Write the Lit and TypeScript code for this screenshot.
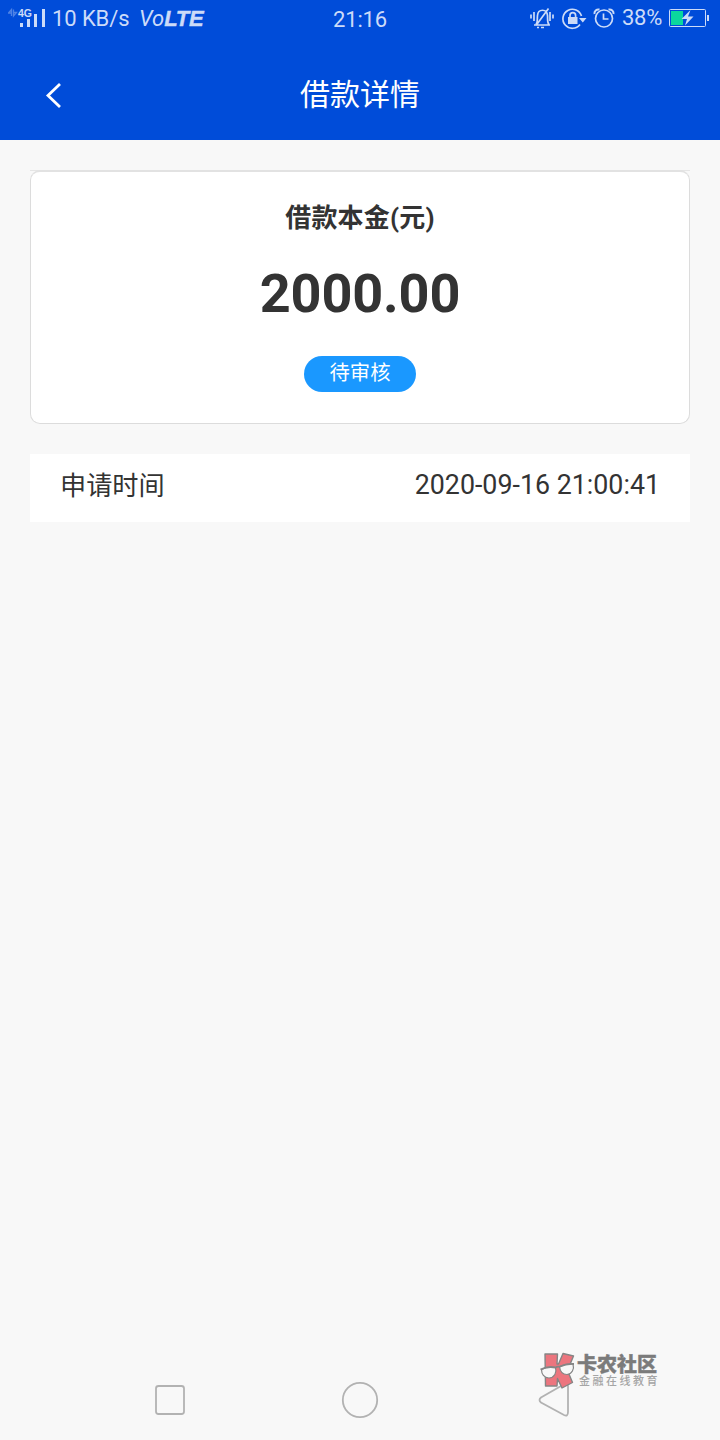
import { LitElement, html, css } from "lit";
import { customElement, property } from "lit/decorators.js";

@customElement("status-bar")
class StatusBar extends LitElement {
  static styles = css`
    :host { display: flex; height: 40px; position: relative; color: #ccdbf8; font: 22px/38px Roboto, sans-serif; justify-content: space-between; }
    svg { display: block; flex: none; }
    .side { display: flex; white-space: pre; }
    .signal { margin-left: 8px; }
    .speed { margin-left: 6px; width: 87px; letter-spacing: -0.1px; line-height: 37px; }
    .volte { font: italic 22px/38px Roboto, sans-serif; }
    .volte b { font: italic bold 22px/38px "Liberation Sans", sans-serif; letter-spacing: -0.3px; -webkit-text-stroke: 0.4px #ccdbf8; }
    .clock { position: absolute; left: 0; right: 0; text-align: center; line-height: 40px; letter-spacing: -0.2px; }
    .percent { width: 47px; line-height: 36px; letter-spacing: -0.3px; }
    .small { font: bold 10px "Liberation Sans", sans-serif; }
  `;
  render() {
    return html`
      <div class="side">
        <svg class="signal" width="38" height="38" viewBox="8 0 38 38" fill="#ccdbf8">
          <path d="M11.500 16V9.500L8.500 13H12M13.500 9.500V16L16.500 12.500H13" fill="none" stroke="#4d82e5" stroke-width="1.300"/>
          <text class="small" x="18" y="16.500" textLength="14" lengthAdjust="spacingAndGlyphs">4G</text>
          <path d="M20 23h3v4h-3zM27 19h3v8h-3zM34 14h3v13h-3zM42 9h3v18h-3z"/>
        </svg>
        <span class="speed">10 KB/s</span>
        <span class="volte">Vo<b>LTE</b></span>
      </div>
      <span class="clock">21:16</span>
      <div class="side">
        <svg width="92" height="38" viewBox="530 0 92 38" fill="none" stroke="#ccdbf8" stroke-width="1.7">
          <path d="M531 14.500v4M534 12v9M550 12v9M553 14.500v4M534 25h16M536 24.500c2-2 1-5 1.500-9 .5-7 9.500-7 10 0 .3 4-.5 7 1.500 9M536 25.500L548.500 8.500M537 27.500h2M541 27.500h3"/>
          <path d="M581.500 16a9.500 9.500 0 1 0-1.500 8.500"/>
          <path d="M579 18h7.500l-3.700 4.500zM568 17h9.500v7H568z" fill="#ccdbf8" stroke="none"/>
          <path d="M570 18v-2.500a2.800 2.800 0 0 1 5.600 0V18"/>
          <circle cx="604" cy="18.500" r="8.500"/>
          <path d="M603.500 13.500v5.500h5"/>
          <path d="M594.500 14c-.5-3 2-5 5-4.500M608.500 9.500c3-.5 5.500 1.500 5 4.500" stroke-width="2"/>
        </svg>
        <span class="percent">38%</span>
        <svg width="51" height="38" viewBox="669 0 51 38">
          <rect x="669.500" y="9.500" width="36" height="17" rx="1" fill="none" stroke="#ccdbf8"/>
          <path d="M671 11h12v14h-12z" fill="#0bd79d"/>
          <path d="M707 15h2v6h-2z" fill="#ccdbf8"/>
          <path d="M690.500 10l-9 9h5.500l-2 6.500 8.500-9H688z" fill="#ccdbf8"/>
        </svg>
      </div>
    `;
  }
}

@customElement("title-bar")
class TitleBar extends LitElement {
  static styles = css`
    :host { display: grid; grid-template-columns: 80px 1fr 80px; height: 100px; align-items: start; color: #fff; }
    .back { margin: 41px 0 0 44px; display: block; }
    .title { font: 30px/44px Roboto, "Noto Sans CJK SC", sans-serif; text-align: center; padding-top: 33px; }
  `;
  @property() heading = "";
  render() {
    return html`
      <svg class="back" width="20" height="28" viewBox="0 0 20 28" fill="none" stroke="#fff" stroke-width="2.8"><path d="M16 3L4 14.500 16 26"/></svg>
      <div class="title">${this.heading}</div>
    `;
  }
}

@customElement("brand-mark")
class BrandMark extends LitElement {
  static styles = css`
    :host { display: flex; color: #7b7b7b; font-family: "Noto Sans CJK SC", sans-serif; white-space: nowrap; }
    svg { display: block; flex: none; }
    .name { font-size: 20px; line-height: 24px; font-weight: 900; -webkit-text-stroke: 0.4px #7b7b7b; }
    .tag { font-size: 11px; line-height: 12px; margin-top: -2px; letter-spacing: 2.500px; padding-left: 2px; color: #a5a5a5; font-weight: 500; }
  `;
  render() {
    return html`
      <svg width="37" height="38" viewBox="540 1352 37 38" stroke="#858585" stroke-width="1.400" stroke-linejoin="round">
        <path d="M545 1354h12.500l-.5 10 1.500 0 4.500-10.500 10.500 2.500-6 14.500 5 12-10.500 5.500-4.500-9.500-.5 7.500h-11.500z" fill="#ec757e"/>
        <path d="M541.500 1369.500c4-2 10-2.500 14-2 1.500 5-1 10-6.500 10.500-5 0-7.500-4-7.500-8.500zM559.500 1366.500c4-2 9-3 13.500-2.500 1.500 5-1 10-6 10.500-4.500 0-7-3.500-7.500-8z" fill="#f8f8f8" stroke-width="1.200"/>
        <path d="M540.500 1369.500c5-2.500 10-3 15-2 1.500-1 2.500-1 4-.7 5-2.500 10-3 14.500-2.800" fill="none" stroke-width="1.800"/>
      </svg>
      <div>
        <div class="name">卡农社区</div>
        <div class="tag">金融在线教育</div>
      </div>
    `;
  }
}

@customElement("app-root")
class AppRoot extends LitElement {
  static styles = css`
    :host { display: flex; flex-direction: column; height: 1440px; width: 720px; position: relative; overflow: hidden; background: #f8f8f8; color: #333; font-family: Roboto, "Noto Sans CJK SC", sans-serif; }
    .top { background: #004cd9; height: 140px; flex: none; }
    main { flex: 1; padding: 30px; }
    .wrap { border-top: 1px solid #e5e5e5; }
    .card { box-sizing: border-box; height: 254px; margin-top: -1px; border: 1px solid #dcdcdc; border-top-width: 2px; border-top-color: #e2e2e2; border-radius: 10px; background: #fff; display: flex; flex-direction: column; align-items: center; }
    .label { font-size: 26px; line-height: 38px; font-weight: 700; margin-top: 27px; letter-spacing: 0.2px; }
    .amount { font-size: 54px; line-height: 64px; font-weight: 700; margin-top: 25px; letter-spacing: -0.15px; }
    .badge { width: 112px; height: 36px; border-radius: 18px; background: #1a98ff; color: #fff; font-size: 20.300px; line-height: 35px; text-align: center; margin-top: 30px; }
    .row { display: flex; justify-content: space-between; box-sizing: border-box; height: 68px; padding: 0 30px; margin-top: 30px; background: #fff; font-size: 26.200px; line-height: 64px; }
    .value { font-size: 26.800px; line-height: 62px; }
    nav { height: 80px; display: flex; justify-content: space-between; align-items: center; padding: 0 150px; }
    nav svg { display: block; }
    brand-mark { position: absolute; left: 540px; top: 1352px; }
  `;
  render() {
    return html`
      <div class="top">
        <status-bar></status-bar>
        <title-bar heading="借款详情"></title-bar>
      </div>
      <main>
        <div class="wrap">
          <section class="card">
            <div class="label">借款本金(元)</div>
            <div class="amount">2000.00</div>
            <div class="badge">待审核</div>
          </section>
        </div>
        <div class="row"><span>申请时间</span><span class="value">2020-09-16 21:00:41</span></div>
      </main>
      <nav>
        <svg width="40" height="40" fill="none" stroke="#b2b2b2" stroke-width="1.8"><rect x="6" y="6" width="28" height="28" rx="2.500"/></svg>
        <svg width="40" height="40" fill="none" stroke="#b2b2b2" stroke-width="1.8"><circle cx="20" cy="20" r="17.200"/></svg>
        <svg width="40" height="40" fill="none" stroke="#b2b2b2" stroke-width="1.8"><path d="M34.500 4q3-2 3.500 2v26q0 5-4 3L11 22.500q-3-2.500 0-5z"/></svg>
      </nav>
      <brand-mark></brand-mark>
    `;
  }
}
